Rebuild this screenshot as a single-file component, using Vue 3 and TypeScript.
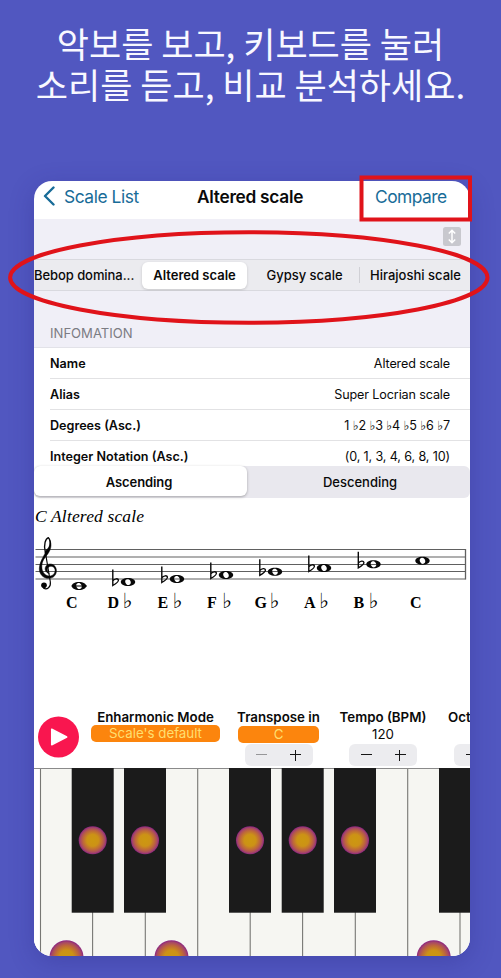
<script setup lang="ts">
interface InfoRow { label: string; value: string }
interface StaffNote { x: number; y: number; letter: string; labelX: number; flat: boolean }

const rows: InfoRow[] = [
  { label: 'Name', value: 'Altered scale' },
  { label: 'Alias', value: 'Super Locrian scale' },
  { label: 'Degrees (Asc.)', value: '1 ♭2 ♭3 ♭4 ♭5 ♭6 ♭7' },
  { label: 'Integer Notation (Asc.)', value: '(0, 1, 3, 4, 6, 8, 10)' },
]

const staffLines = [49.5, 57, 64.5, 71.5, 79]

const notes: StaffNote[] = [
  { x: 45, y: 86, letter: 'C', labelX: 32, flat: false },
  { x: 94, y: 82, letter: 'D', labelX: 73.5, flat: true },
  { x: 143, y: 79, letter: 'E', labelX: 123.5, flat: true },
  { x: 192, y: 75, letter: 'F', labelX: 173, flat: true },
  { x: 241, y: 71.8, letter: 'G', labelX: 220.5, flat: true },
  { x: 290, y: 68, letter: 'A', labelX: 270, flat: true },
  { x: 339.5, y: 64.3, letter: 'B', labelX: 319.5, flat: true },
  { x: 388.5, y: 60.8, letter: 'C', labelX: 376, flat: false },
]

const keyLines = [6.5, 58.6, 111.3, 163.7, 216.2, 268.6, 321.3, 373.7, 426]
const blackKeys = [
  { x: 37.7, dot: true },
  { x: 90, dot: true },
  { x: 195, dot: true },
  { x: 247.7, dot: true },
  { x: 300, dot: true },
  { x: 405, dot: false },
]
const whiteDots = [32.5, 137.5, 399.7]
</script>

<template>
  <div class="page">
    <h1 class="headline">
      <span class="line">악보를 보고, 키보드를 눌러</span>
      <span class="line">소리를 듣고, 비교 분석하세요.</span>
    </h1>

    <main class="phone">
      <nav class="nav">
        <span class="back">
          <svg class="chev" width="13" height="20" viewBox="0 0 13 20"><path d="M10.5 1.5 2 10 10.5 18.5" fill="none" stroke="#186c98" stroke-width="2.4" stroke-linecap="round" stroke-linejoin="round" /></svg>
          <span class="back-text">Scale List</span>
        </span>
        <span class="title">Altered scale</span>
        <span class="compare">Compare</span>
      </nav>

      <div class="tool">
        <svg width="18" height="19" viewBox="0 0 18 19">
          <rect width="18" height="19" rx="2.5" fill="#c8c8ce" />
          <path d="M9 3.5v12M5.8 6.5 9 3.3l3.2 3.2M5.8 12.5 9 15.7l3.2-3.2" fill="none" stroke="#fff" stroke-width="1.5" />
        </svg>
      </div>

      <div class="scales">
        <span class="scale first">Bebop domina...</span>
        <span class="scale active">Altered scale</span>
        <span class="scale third">Gypsy scale</span>
        <i class="divider"></i>
        <span class="scale fourth">Hirajoshi scale</span>
      </div>

      <div class="section">INFOMATION</div>

      <div class="rows">
        <div v-for="row in rows" :key="row.label" class="row">
          <b>{{ row.label }}</b>
          <span class="row-value">{{ row.value }}</span>
        </div>
      </div>

      <div class="direction">
        <span class="dir on">Ascending</span>
        <span class="dir">Descending</span>
      </div>

      <svg class="staff" width="436" height="207" viewBox="0 -2 436 207">
        <text x="1" y="22" class="caption" textLength="109">C Altered scale</text>
        <path v-for="y in staffLines" :key="y" :d="`M1.5 ${y}H431.5`" stroke="#606060" stroke-width="1.1" />
        <path d="M431.5 49V79.5" stroke="#606060" stroke-width="1.3" />
        <g transform="translate(-9 0) scale(.3333)" fill="none" stroke="#050505" stroke-linecap="round">
          <path d="M61 156C55 132 62 116 70 113C80 124 77 146 64 162" stroke-width="4" />
          <path d="M64 150C74 142 76 132 74 120C82 134 78 152 62 170C52 182 49 193 51 207C54 222 65 229 76 228C92 225 94 207 85 201C77 196 67 201 67 209C67 216 71 219 73 221C62 218 58 208 62 200C67 190 82 189 90 199C100 213 92 234 73 235C54 236 42 222 43 204C45 181 58 169 64 150Z" fill="#050505" stroke-width="1.5" />
          <path d="M61 156L76 246C78 262 66 270 56 265" stroke-width="3.5" />
          <circle cx="57" cy="256" r="8.5" fill="#050505" stroke="none" />
        </g>
        <path d="M37.5 86H53" stroke="#111" stroke-width="1.1" />
        <g v-for="(n, i) in notes" :key="i">
          <path :transform="`translate(${n.x} ${n.y})`" fill="#080808" fill-rule="evenodd" d="M0-4C4.4-4 7.2-2.2 7.2 0S4.4 4 0 4-7.2 2.2-7.2 0-4.4-4 0-4ZM-1-3C-3-2.4-3.2-.5-2.3 1.2-1.4 2.9-.3 3.3 1 3 3 2.4 3.2.5 2.3-1.2 1.4-2.9.3-3.3-1-3Z" />
          <path v-if="n.flat" :transform="`translate(${n.x - 15.2} ${n.y})`" fill="none" stroke="#080808" stroke-width="1.4" d="M0-12.5V3.5C3 1.8 6 0 5.6-2 5.2-3.8 2-3.6 0-1.2" />
          <text :x="n.labelX" y="108" class="note">{{ n.letter }}<tspan v-if="n.flat" class="flat" :x="n.labelX + 15">♭</tspan></text>
        </g>
      </svg>

      <div class="controls">
        <div class="play">
          <svg width="42" height="42" viewBox="0 0 42 42"><circle cx="20.5" cy="21" r="20.5" fill="#f9164f" /><path d="M13.7 13.2v15.6L28.7 21Z" fill="#fff" stroke="#fff" stroke-width="1.5" stroke-linejoin="round" /></svg>
        </div>
        <div class="control mode">
          <b>Enharmonic Mode</b>
          <span class="pill">Scale's default</span>
        </div>
        <div class="control transpose">
          <b>Transpose in</b>
          <span class="pill low">C</span>
          <span class="stepper"><i class="minus dim"></i><i class="plus"></i></span>
        </div>
        <div class="control tempo">
          <b>Tempo (BPM)</b>
          <span class="value">120</span>
          <span class="stepper"><i class="minus"></i><i class="plus"></i></span>
        </div>
        <div class="control octave">
          <b>Oct</b>
          <span class="value"></span>
          <span class="stepper"><i class="minus"></i></span>
        </div>
      </div>

      <svg class="piano" width="436" height="188" viewBox="0 0 436 188">
        <defs>
          <radialGradient id="dot">
            <stop offset="0" stop-color="#cc9810" />
            <stop offset=".42" stop-color="#cc9216" />
            <stop offset=".7" stop-color="#bd663c" />
            <stop offset=".88" stop-color="#a74866" />
            <stop offset="1" stop-color="#8b2580" />
          </radialGradient>
        </defs>
        <rect width="436" height="188" fill="#f6f6f2" />
        <rect width="6" height="188" fill="#fff" />
        <path v-for="x in keyLines" :key="x" :d="`M${x} 0V188`" stroke="#777774" stroke-width="1.1" />
        <path d="M0 .5H436" stroke="#8a8a8a" />
        <g v-for="k in blackKeys" :key="k.x">
          <rect :x="k.x" y="0" width="42" height="144.7" fill="#1b1b1b" />
          <circle v-if="k.dot" :cx="k.x + 21" cy="72.3" r="14" fill="url(#dot)" />
        </g>
        <circle v-for="x in whiteDots" :key="x" :cx="x" cy="189.3" r="17" fill="url(#dot)" />
      </svg>
    </main>

    <svg class="marks" width="501" height="978" viewBox="0 0 501 978" fill="none" stroke="#e0131a">
      <rect x="361.5" y="177.5" width="108.5" height="42" stroke-width="4" />
      <ellipse cx="248.8" cy="277.5" rx="238.7" ry="45.2" stroke-width="4" />
    </svg>
  </div>
</template>

<style>
body { margin: 0; background: #5157c0; }
</style>

<style scoped>
.page {
  position: relative;
  box-sizing: border-box;
  width: 501px;
  height: 978px;
  overflow: hidden;
  background: #5157c0;
  font-family: Inter, "Liberation Sans", sans-serif;
  color: #0a0a0a;
}
.headline {
  display: flex;
  flex-direction: column;
  align-items: center;
  margin: 0;
  height: 181px;
  box-sizing: border-box;
  padding-top: 22px;
  font: 400 35px/41px "Noto Sans CJK KR", sans-serif;
  color: #f8f8ff;
}
.line { white-space: nowrap; }
.phone {
  display: flex;
  flex-direction: column;
  width: 436px;
  height: 775px;
  margin-left: 34px;
  overflow: hidden;
  border-radius: 18px;
  background: #fff;
  box-shadow: 0 6px 24px rgba(40, 38, 130, .3);
}
.nav {
  display: grid;
  grid-template-columns: 163px 178px 95px;
  align-items: center;
  flex: none;
  height: 38px;
  padding-bottom: 8px;
  box-sizing: border-box;
  font-size: 17.4px;
  white-space: nowrap;
}
.back { display: flex; align-items: center; gap: 8px; padding-left: 9px; color: #186c98; }
.back-text { letter-spacing: -.45px; }
.title { font-weight: 600; font-size: 17.3px; letter-spacing: -.28px; }
.compare { color: #186c98; letter-spacing: -.55px; }
.tool {
  display: flex;
  flex: none;
  justify-content: flex-end;
  align-items: center;
  height: 40px;
  padding: 0 9px 6px 0;
  box-sizing: border-box;
  background: #f0eff7;
}
.scales {
  display: flex;
  flex: none;
  align-items: center;
  height: 32px;
  box-sizing: border-box;
  border-top: 1px solid #d9d9df;
  border-bottom: 1px solid #d9d9df;
  background: #ebebef;
  font-size: 13px;
  font-weight: 500;
  white-space: nowrap;
}
.first { width: 108px; letter-spacing: -.07px; }
.active {
  width: 105px;
  height: 27px;
  line-height: 27px;
  border-radius: 6px;
  text-align: center;
  background: #fff;
  box-shadow: 0 1px 3px rgba(0, 0, 0, .16);
  font-weight: 600;
}
.third { width: 112px; padding-left: 3px; box-sizing: border-box; text-align: center; }
.divider { width: 1px; height: 16px; background: #d0d0d5; }
.fourth { margin-left: 10px; }
.section {
  flex: none;
  height: 57px;
  box-sizing: border-box;
  padding: 33px 0 0 16px;
  border-bottom: 1px solid #e2e2e8;
  background: #f0eff7;
  color: #7c7c83;
  font-size: 13.1px;
  line-height: 18px;
}
.rows { flex: none; height: 118px; overflow: hidden; }
.row {
  display: flex;
  justify-content: space-between;
  height: 31px;
  margin-left: 16px;
  padding-right: 20px;
  box-sizing: border-box;
  border-bottom: 1px solid #e2e2e4;
  font-size: 12.6px;
  line-height: 32px;
}
.row b { font-weight: 600; }
.row-value { letter-spacing: -.13px; font-family: Inter, "DejaVu Sans", sans-serif; }
.direction {
  display: flex;
  flex: none;
  height: 32px;
  border-radius: 6px;
  background: #e9e8ee;
  font-size: 13px;
  font-weight: 500;
}
.dir { flex: 1; padding-left: 3px; line-height: 32px; text-align: center; }
.on {
  flex: 0 0 213px;
  box-sizing: border-box;
  padding: 0 3px 0 0;
  height: 30px;
  border-radius: 6px;
  background: #fff;
  box-shadow: 0 1px 3px rgba(0, 0, 0, .3);
  font-weight: 600;
  letter-spacing: -.1px;
}
.staff { display: block; flex: none; }
.caption { font: italic 17.5px "Liberation Serif", serif; }
.note { font: bold 16px "Liberation Serif", serif; }
.flat { font: 21px "DejaVu Sans", sans-serif; }
.controls { display: flex; flex: none; height: 63px; overflow: hidden; white-space: nowrap; }
.play { width: 42px; margin: 11px 0 0 4px; }
.control { display: flex; flex: none; flex-direction: column; align-items: center; font-size: 13.3px; }
.control b { height: 20px; line-height: 24px; font-weight: 600; }
.mode { width: 129px; margin-left: 11px; }
.transpose { width: 81px; margin-left: 18px; }
.tempo { width: 90px; margin-left: 19px; }
.octave { width: 68px; margin-left: 20px; align-items: flex-start; }
.pill {
  width: 100%;
  height: 17px;
  border-radius: 5px;
  background: #fc850d;
  color: #ffdf70;
  line-height: 17px;
  text-align: center;
}
.low { position: relative; top: 1px; }
.value { height: 17px; line-height: 19px; }
.stepper {
  display: flex;
  align-items: center;
  justify-content: space-around;
  width: 68px;
  height: 22px;
  margin-top: 2px;
  border-radius: 6px;
  background: #ececef;
}
.minus, .plus { width: 11px; height: 11px; background: linear-gradient(#161616, #161616) center / 11px 1.4px no-repeat; }
.plus { background: linear-gradient(#161616, #161616) center / 11px 1.4px no-repeat, linear-gradient(#161616, #161616) center / 1.4px 11px no-repeat; }
.dim { opacity: .4; }
.octave .stepper { justify-content: flex-start; margin-left: 6px; padding-left: 12px; box-sizing: border-box; }
.piano { display: block; flex: none; }
.marks { position: absolute; inset: 0; }
</style>
